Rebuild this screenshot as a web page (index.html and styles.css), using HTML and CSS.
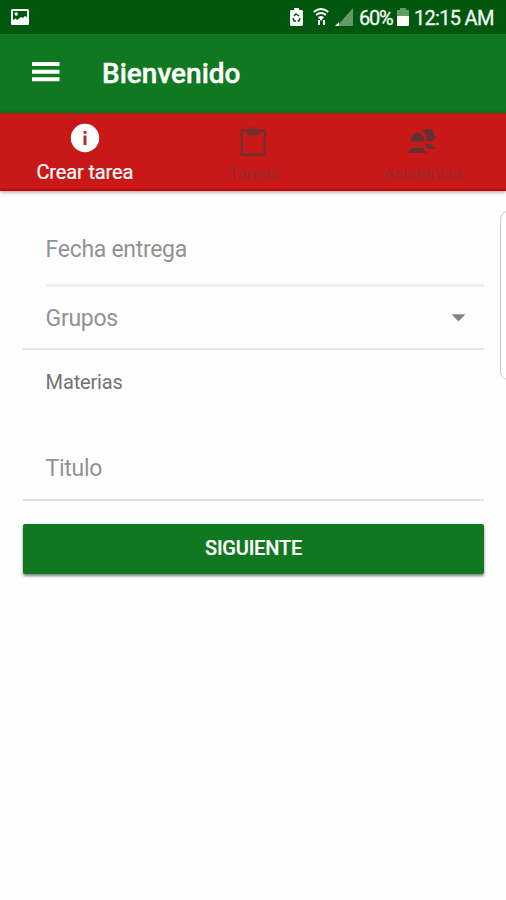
FILE: index.html
```html
<!DOCTYPE html>
<html lang="es">
<head>
<meta charset="utf-8">
<title>Bienvenido</title>
<link rel="stylesheet" href="styles.css">
</head>
<body>
<div class="screen">
  <div class="status">
    <svg class="picture" width="18" height="16" viewBox="0 0 18 16"><path fill="#fff" fill-rule="evenodd" d="M1.500 0h15A1.500 1.500 0 0 1 18 1.500v13a1.500 1.500 0 0 1-1.500 1.500h-15A1.500 1.500 0 0 1 0 14.500v-13A1.500 1.500 0 0 1 1.500 0zM2 2v9l2.500-1.500L6 11l4-3 2 1 2-2 2 1V2z"/><circle cx="5.200" cy="5" r="1.700" fill="#fff"/></svg>
    <svg class="saver" width="13" height="18" viewBox="0 0 13 18"><path fill="#fff" d="M4 0h5v2h2.500A1.500 1.500 0 0 1 13 3.500v13a1.500 1.500 0 0 1-1.500 1.500h-10A1.500 1.500 0 0 1 0 16.500v-13A1.500 1.500 0 0 1 1.500 2H4z"/><path fill="none" stroke="#00570d" stroke-width="1.500" d="M4 8l2-2 3 2M3 10l1 3h2M10 10l-1 3H7.500"/></svg>
    <svg class="wifi" width="16" height="18" viewBox="0 0 16 18"><g fill="none" stroke="#fff" stroke-width="1.800"><path d="M.7 4Q8-2 15.300 4M3 7q5-4 10 0M5.500 10Q8 8 10.500 10"/></g><path fill="#fff" d="M8 13L6 10h4zM5 12h2v5H5zM10 12h2v5h-2z"/></svg>
    <svg class="signal" width="18" height="18" viewBox="0 0 18 18"><path fill="#659a6b" d="M18 0v18H2z"/><path fill="#fff" d="M4 14v4H0z"/></svg>
    <span class="percent">60%</span>
    <svg class="battery" width="12" height="18" viewBox="0 0 12 18"><path fill="#659a6b" d="M3 0h6v2h3v6H0V2h3z"/><path fill="#fff" d="M0 8h12v9a1 1 0 0 1-1 1H1a1 1 0 0 1-1-1z"/></svg>
    <span class="clock">12:15 AM</span>
  </div>
  <header class="toolbar">
    <svg width="28" height="20" viewBox="0 0 28 20"><path fill="#fff" d="M0 0h27.500v4H0zM0 7.700h27.500v4H0zM0 15.300h27.500v4H0z"/></svg>
    <h1 class="title">Bienvenido</h1>
  </header>
  <nav class="tabs">
    <a class="tab active">
      <svg width="30" height="30" viewBox="0 0 30 30"><circle cx="15" cy="15" r="14.200" fill="#fff"/><path fill="#b9282a" d="M13.500 8h3v2.700h-3zM13.500 12.500h3V22h-3z"/></svg>
      <span class="label">Crear tarea</span>
    </a>
    <a class="tab">
      <svg width="30" height="30" viewBox="0 0 30 30"><path fill="none" stroke="#71302d" stroke-width="2.400" d="M3.700 7.500h23.200v24.300H3.700z"/><path fill="#71302d" fill-rule="evenodd" d="M8 6.500h3.700a3.700 3.700 0 0 1 7 0H23V10l-3 2.500h-9L8 10zM15.200 5.200a1.500 1.500 0 1 0 0 3 1.500 1.500 0 0 0 0-3z"/></svg>
      <span class="label">Tareas</span>
    </a>
    <a class="tab">
      <svg width="30" height="30" viewBox="0 0 30 30"><path fill="#653032" d="M3.500 18.500a7 9 0 0 1 14 0zM15.500 8.500L19 6h6l3.500 8-2 4h-6.500Q20 11 15.500 8.500zM.5 30l4-5h11l4.500 5zM18 21h6l5.500 5H21z"/><path fill="#a82625" d="M4.500 19.500h12L14 23.500H7z"/></svg>
      <span class="label">Asistencia</span>
    </a>
  </nav>
  <main class="form">
    <div class="field date"><span>Fecha entrega</span></div>
    <div class="field select"><span>Grupos</span><svg width="15" height="8" viewBox="0 0 15 8"><path fill="#858585" d="M.5.3h14L7.500 7.500z"/></svg></div>
    <div class="field subjects"><span>Materias</span></div>
    <div class="field name"><span>Titulo</span></div>
    <button class="next"><span>SIGUIENTE</span></button>
  </main>
  <div class="edge-handle"></div>
</div>
</body>
</html>
```
FILE: styles.css
```css
* { box-sizing: border-box; }
body { margin: 0; background: #fefefe; font-family: Roboto, sans-serif; }
.screen { position: relative; width: 506px; height: 900px; overflow: hidden; }
svg { display: block; flex: none; overflow: visible; }

.status { height: 34px; padding: 0 11px; display: flex; align-items: center; background: #00570d; color: #f3f8f3; font-size: 20px; white-space: nowrap; }
.saver { margin-left: 261px; }
.wifi { margin-left: 10px; }
.signal { margin-left: 6px; }
.percent { width: 33px; margin: 2px 0 0 6px; letter-spacing: -1.2px; -webkit-text-stroke: .3px; }
.battery { margin-left: 5px; }
.clock { margin: 2px 0 0 5px; letter-spacing: -.7px; -webkit-text-stroke: .3px; }

.toolbar { height: 79px; padding: 0 32px 3px; display: flex; align-items: center; gap: 42px; background: #107820; }
.title { margin: 4px 0 0; color: #fff; font-size: 28px; font-weight: 500; line-height: 32px; -webkit-text-stroke: .4px; }

.tabs { height: 78px; display: grid; grid-template-columns: repeat(3, 1fr); background: #c81918; border-top: 1px solid #9b2418; border-bottom: 2px solid #c60505; box-shadow: 0 1px 4px rgba(0, 0, 0, .4); }
.tab { display: flex; flex-direction: column; align-items: center; padding: 9px 0 0 1px; color: #96292a; }
.label { margin-top: 9px; font-size: 17px; line-height: 22px; letter-spacing: -.1px; }
.active { color: #fff; }
.active .label { margin-top: 8px; font-size: 20px; letter-spacing: -.15px; -webkit-text-stroke: .2px; }

.form { padding: 26px 22px 0 23px; }
.field { display: flex; align-items: center; padding-left: 22.6px; color: #929292; font-size: 23px; line-height: 28px; letter-spacing: -.3px; }
.date { height: 70px; margin-left: 23px; padding: 0 0 2px; border-bottom: 3px solid #efefef; }
.date span { margin-left: -.4px; }
.select { height: 63px; justify-content: space-between; padding-top: 2px; padding-right: 18px; border-bottom: 2px solid #e5e5e5; }
.select svg { margin-top: -1px; }
.subjects { height: 64px; color: #737373; font-size: 20px; letter-spacing: -.15px; }
.name { height: 87px; padding-top: 24px; border-bottom: 2px solid #e2e2e2; }
.next { display: flex; align-items: center; justify-content: center; width: 461px; height: 50px; margin-top: 23px; padding: 0 0 2px; border: 0; border-radius: 2px; background: #107820; box-shadow: 0 2px 3px rgba(0, 0, 0, .5); color: #fff; font: 500 20px/24px Roboto, sans-serif; letter-spacing: -.2px; -webkit-text-stroke: .2px; }

.edge-handle { position: absolute; left: 500px; top: 211px; width: 20px; height: 169px; border: 1px solid #cbcbcb; border-radius: 8px; background: #fff; }
```
